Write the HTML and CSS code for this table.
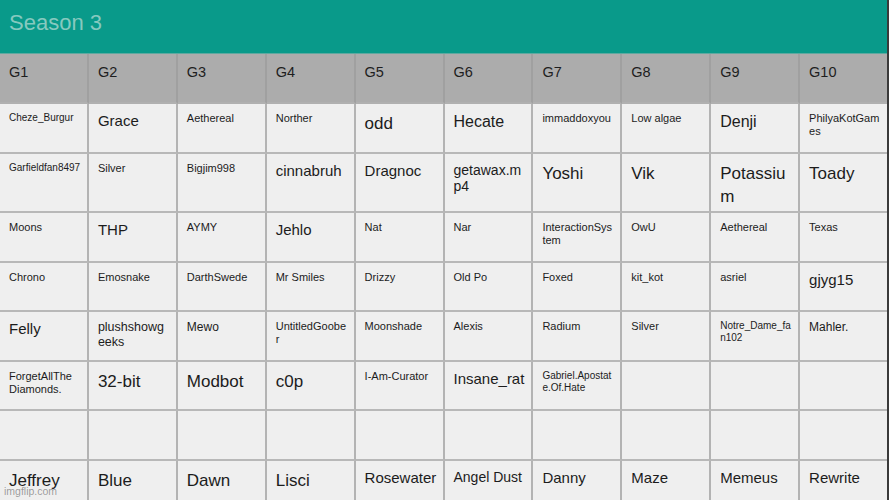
FILE: index.html
```html
<!DOCTYPE html>
<html lang="en">
<head>
<meta charset="utf-8">
<title>Season 3</title>
<link rel="stylesheet" href="styles.css">
</head>
<body>
<div class="page">
  <header class="title">Season 3</header>
  <div class="grid">
    <div class="cell head">G1</div>
    <div class="cell head">G2</div>
    <div class="cell head">G3</div>
    <div class="cell head">G4</div>
    <div class="cell head">G5</div>
    <div class="cell head">G6</div>
    <div class="cell head">G7</div>
    <div class="cell head">G8</div>
    <div class="cell head">G9</div>
    <div class="cell head">G10</div>

    <div class="cell s10">Cheze_Burgur</div>
    <div class="cell s15">Grace</div>
    <div class="cell s11">Aethereal</div>
    <div class="cell s11">Norther</div>
    <div class="cell s17">odd</div>
    <div class="cell s16">Hecate</div>
    <div class="cell s11">immaddoxyou</div>
    <div class="cell s11">Low algae</div>
    <div class="cell s16">Denji</div>
    <div class="cell s11">PhilyaKotGames</div>

    <div class="cell s10">Garfieldfan8497</div>
    <div class="cell s11">Silver</div>
    <div class="cell s11">Bigjim998</div>
    <div class="cell s15">cinnabruh</div>
    <div class="cell s15">Dragnoc</div>
    <div class="cell s14">getawax.mp4</div>
    <div class="cell s17">Yoshi</div>
    <div class="cell s17">Vik</div>
    <div class="cell s17">Potassium</div>
    <div class="cell s17">Toady</div>

    <div class="cell s11">Moons</div>
    <div class="cell s15">THP</div>
    <div class="cell s11">AYMY</div>
    <div class="cell s15">Jehlo</div>
    <div class="cell s11">Nat</div>
    <div class="cell s11">Nar</div>
    <div class="cell s11">InteractionSystem</div>
    <div class="cell s11">OwU</div>
    <div class="cell s11">Aethereal</div>
    <div class="cell s11">Texas</div>

    <div class="cell s11">Chrono</div>
    <div class="cell s11">Emosnake</div>
    <div class="cell s11">DarthSwede</div>
    <div class="cell s11">Mr Smiles</div>
    <div class="cell s11">Drizzy</div>
    <div class="cell s11">Old Po</div>
    <div class="cell s11">Foxed</div>
    <div class="cell s11">kit_kot</div>
    <div class="cell s11">asriel</div>
    <div class="cell s15">gjyg15</div>

    <div class="cell s15">Felly</div>
    <div class="cell s12h">plushshowgeeks</div>
    <div class="cell s12">Mewo</div>
    <div class="cell s11">UntitledGoober</div>
    <div class="cell s11">Moonshade</div>
    <div class="cell s11">Alexis</div>
    <div class="cell s11">Radium</div>
    <div class="cell s11">Silver</div>
    <div class="cell s10">Notre_Dame_fan102</div>
    <div class="cell s12">Mahler.</div>

    <div class="cell s11">ForgetAllThe Diamonds.</div>
    <div class="cell s17">32-bit</div>
    <div class="cell s17">Modbot</div>
    <div class="cell s17">c0p</div>
    <div class="cell s11">I-Am-Curator</div>
    <div class="cell s15">Insane_rat</div>
    <div class="cell s10">Gabriel.Apostate.Of.Hate</div>
    <div class="cell"></div>
    <div class="cell"></div>
    <div class="cell"></div>

    <div class="cell"></div>
    <div class="cell"></div>
    <div class="cell"></div>
    <div class="cell"></div>
    <div class="cell"></div>
    <div class="cell"></div>
    <div class="cell"></div>
    <div class="cell"></div>
    <div class="cell"></div>
    <div class="cell"></div>

    <div class="cell s17">Jeffrey</div>
    <div class="cell s17">Blue</div>
    <div class="cell s17">Dawn</div>
    <div class="cell s17">Lisci</div>
    <div class="cell s15 nowrap">Rosewater</div>
    <div class="cell s14">Angel Dust</div>
    <div class="cell s15">Danny</div>
    <div class="cell s15">Maze</div>
    <div class="cell s15">Memeus</div>
    <div class="cell s15">Rewrite</div>
  </div>
  <span class="watermark">imgflip.com</span>
</div>
</body>
</html>
```

FILE: styles.css
```css
* { box-sizing: border-box; }

html, body {
  margin: 0;
  padding: 0;
  background: #efefef;
}

body {
  width: 889px;
  height: 500px;
  overflow: hidden;
  font-family: "Liberation Sans", Arial, sans-serif;
  color: #1c1c1c;
}

.page {
  position: relative;
  width: 889px;
  height: 500px;
  overflow: hidden;
}

/* dark edge line of the captured image */
.page::after {
  content: "";
  position: absolute;
  top: 0;
  right: 0;
  width: 2px;
  height: 100%;
  background: #3a3a3a;
}

.title {
  height: 54px;
  background: #099a8a;
  border-bottom: 1px solid #5fa9a0;
  color: #86c9bf;
  font-size: 22px;
  line-height: 26px;
  padding: 10px 0 0 9px;
}

.grid {
  display: grid;
  grid-template-columns: repeat(10, 1fr);
  grid-template-rows: 50px 50px 59px 50px 49px 50px 49px 50px 50px;
  background: #efefef;
}

.cell {
  background: #efefef;
  border-right: 2px solid #b3b3b3;
  border-bottom: 2px solid #b8b8b8;
  padding: 8px 6px 2px 9px;
  word-break: break-all;
  font-size: 11px;
  line-height: 13px;
}

.nowrap { white-space: nowrap; }

.head {
  background: #acacac;
  border-right-color: #a0a0a0;
  border-bottom-color: #b0b0b0;
  font-size: 14.5px;
  line-height: 18px;
  padding-top: 9px;
  color: #1e1e1e;
}

.s10 { font-size: 10px; line-height: 12px; }
.s11 { font-size: 11px; line-height: 13px; }
.s12 { font-size: 12px; line-height: 14px; }
.s12h { font-size: 12.5px; line-height: 15px; }
.s14 { font-size: 14px; line-height: 16px; }
.s15 { font-size: 15px; line-height: 18px; }
.s16 { font-size: 16px; line-height: 20px; }
.s17 { font-size: 17px; line-height: 23px; }

.watermark {
  position: absolute;
  left: 4px;
  bottom: 2px;
  font-size: 10.5px;
  line-height: 13px;
  color: #9a9a9a;
  text-shadow: 0 0 1px #ffffff;
}
```
